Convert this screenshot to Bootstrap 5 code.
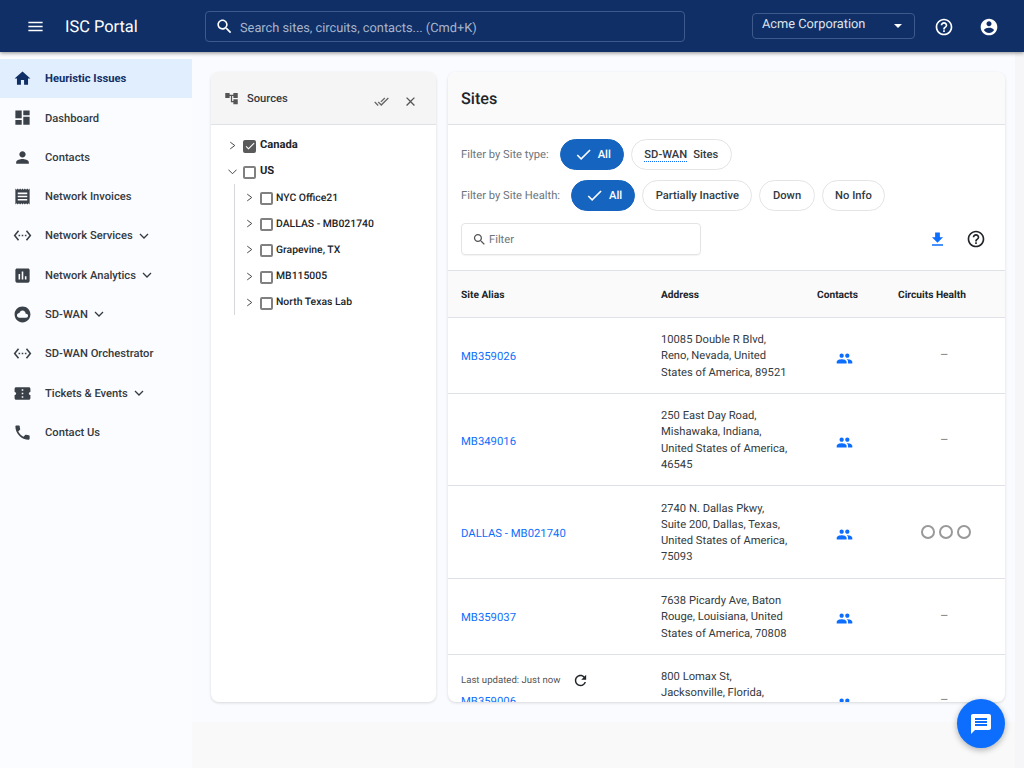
<!DOCTYPE html>
<html lang="en">
<head>
  <meta charset="UTF-8">
  <meta name="viewport" content="width=device-width, initial-scale=1.0">
  <title>ISC Portal</title>
  <link href="https://cdn.jsdelivr.net/npm/bootstrap@5.3.3/dist/css/bootstrap.min.css" rel="stylesheet">
  <style>
    html, body { height: 768px; overflow: hidden; }
    body { font-family: Roboto, "Liberation Sans", sans-serif; font-size: 11.2px; color: #212529; background: #f8fafe; text-rendering: geometricPrecision; }
    svg { fill: currentColor; display: block; flex: none; }
    .chev { fill: none; stroke: currentColor; stroke-width: 2.6; }

    .top-bar { height: 52px; background: #0f2f66; color: #fff; padding: 0 0 0 26px; box-shadow: 0 1px 4px rgba(0,0,0,.45); position: relative; z-index: 2; }
    .brand-name { font-size: 16.4px; margin-left: 20px; width: 140px; padding-top: 4px; }
    .search-box { width: 480px; height: 31px; border: 1px solid #3e5a8c; border-radius: 4px; padding: 5px 0 0 9px; color: #a9b5cb; font-size: 12.8px; }
    .search-box svg { color: #fff; margin-right: 6px; margin-top: -5px; }
    .org-select { width: 163px; height: 26px; margin-left: 67px; border: 1px solid #3e5a8c; border-radius: 4px; padding: 0 12px 2px 9px; font-size: 12.8px; color: #dfe4ee; }
    .org-caret { width: 0; height: 0; border-left: 4px solid transparent; border-right: 4px solid transparent; border-top: 4px solid #fff; margin-top: 1px; }
    .top-icon { margin-left: 19px; margin-top: 2px; }
    .top-icon.icon-last { margin-left: 25px; }

    .page-body { height: 716px; }
    .side-menu { width: 192px; flex: none; background: #fbfcff; padding-top: 7px; height: 716px; }
    .menu-item { height: 39.3px; padding: 2px 0 0 13px; color: #343a40; font-weight: 500; }
    .menu-item svg { margin-top: -2px; }
    .menu-item > svg:first-child { margin-right: 13px; color: #3b4148; }
    .menu-item .chev { margin-left: 5px; }
    .menu-item.is-active { background: #e1eefe; color: #0f2f66; font-weight: 700; }
    .menu-item.is-active > svg:first-child { color: #0f2f66; }

    .work-area { flex: 1; padding: 20px 19px 0 19px; height: 716px; background: linear-gradient(to left, #f6f6f8 9px, transparent 9px), linear-gradient(#fafbfe 670px, #f9f9fa 670px); }
    .panel { background: #fff; border: 0; border-radius: 8px; box-shadow: 0 1px 3px rgba(0,0,0,.14); height: 630px; overflow: hidden; position: relative; }
    .sources-panel { width: 225px; flex: none; }
    .sites-panel { width: 557px; flex: none; margin-left: 12px; }
    .panel-head { background: #f5f5f5; height: 53px; border-bottom: 1px solid #dee2e6; padding: 2px 18px 0 13px; font-size: 11.2px; font-weight: 500; color: #343a40; }
    .panel-head svg { margin-top: -2px; }
    .panel-head .panel-action { margin-top: 4px; }
    .sites-panel .panel-head { background: #fafafa; font-size: 16.2px; padding-left: 13px; color: #212529; }

    .tree-list { padding: 7px 0 0 17px; }
    .tree-row { height: 26.2px; color: #212529; font-weight: 500; font-size: 10.4px; }
    .tree-row .chev { color: #444; margin-right: 6px; }
    .tree-box { width: 13px; height: 13px; border: 2px solid #808080; border-radius: 2px; margin-right: 3px; margin-top: 2px; flex: none; display: flex; align-items: center; justify-content: center; }
    .tree-box.is-checked { background: #5a5a5a; border-color: #5a5a5a; color: #fff; }
    .tree-top { font-size: 11.2px; font-weight: 700; }
    .tree-top .tree-box { margin-right: 4px; }
    .tree-kids { margin-left: 6px; padding-left: 10px; border-left: 1px solid #d5d7da; }

    .filter-row { height: 41px; padding-left: 13px; }
    .filter-label { color: #6c757d; margin-right: 11px; padding-top: 1px; }
    .pill { height: 31px; border: 1px solid #e3e4e6; border-radius: 16px; padding: 1px 12.5px 0; font-weight: 500; color: #343a40; background: #fff; margin-right: 7px; }
    .pill.is-on { background: #1565c0; border-color: #1565c0; color: #fff; padding: 1px 12px 0 13px; }
    .pill.is-on svg { margin-right: 5px; margin-top: -1px; }
    .dotted-word { border-bottom: 1px dotted #0d6efd; margin-right: 6px; line-height: 13px; }
    .filter-box { width: 240px; height: 32px; border: 1px solid #e3e4e6; border-radius: 4px; margin-left: 13px; padding: 2px 0 0 10px; color: #6c757d; box-shadow: 0 1px 1px rgba(0,0,0,.05); }
    .filter-box svg { margin-right: 2px; margin-top: -2px; color: #555; }
    .filter-stack { padding-top: 9px; }
    .filter-tools { margin-top: 7px; }

    .sites-table { margin: 15px 0 0; table-layout: fixed; width: 557px; font-size: 11.2px; }
    .sites-table th { height: 47px; background: #fafafa; font-weight: 700; font-size: 10.2px; vertical-align: middle; padding: 4px 0 0; border-top: 1px solid #dee2e6; }
    .sites-table td { vertical-align: middle; padding: 14.1px 0 12.1px; line-height: 16.3px; color: #343a40; }
    .sites-table th:first-child, .sites-table td:first-child { padding-left: 13px; }
    .site-link { display: inline-block; padding-top: 2px; color: #0d6efd; text-decoration: none; font-weight: 400; font-size: 11.3px; }
    .sites-table .addr-cell { padding-right: 26px; }
    .sites-table .no-data { color: #888; padding-left: 42px; font-size: 13px; }
    .people-icon { color: #0d6efd; margin: 3px 0 0 19px; }
    .health-dots { padding-left: 23px; margin-top: -2px; }
    .health-dots i { display: block; width: 14px; height: 14px; border: 2px solid #999; border-radius: 50%; margin-right: 4px; }
    .last-updated { position: absolute; left: 13px; top: 600px; color: #555; font-size: 9.6px; padding-top: 2px; }
    .last-updated svg { margin-left: 11px; margin-top: -2px; color: #212529; }

    .chat-fab { position: absolute; left: 957px; top: 699px; width: 48px; height: 49px; border-radius: 50%; background: #0d6efd; color: #fff; box-shadow: 0 2px 6px rgba(0,0,0,.3); z-index: 3; }
  </style>
</head>
<body>
  <header class="top-bar d-flex align-items-center">
    <svg width="19" height="19" viewBox="0 0 24 24"><path d="M3 18h18v-2H3v2zm0-5h18v-2H3v2zm0-7v2h18V6H3z"/></svg>
    <div class="brand-name">ISC Portal</div>
    <div class="search-box d-flex align-items-center">
      <svg width="19" height="19" viewBox="0 0 24 24"><path d="M15.5 14h-.79l-.28-.27C15.41 12.59 16 11.11 16 9.5 16 5.91 13.09 3 9.5 3S3 5.91 3 9.5 5.91 16 9.5 16c1.61 0 3.09-.59 4.23-1.57l.27.28v.79l5 4.99L20.49 19l-4.99-5zm-6 0C7.01 14 5 11.99 5 9.5S7.01 5 9.5 5 14 7.01 14 9.5 11.99 14 9.5 14z"/></svg>
      <span>Search sites, circuits, contacts... (Cmd+K)</span>
    </div>
    <div class="org-select d-flex align-items-center justify-content-between">
      <span>Acme Corporation</span><span class="org-caret"></span>
    </div>
    <svg class="top-icon" width="20" height="20" viewBox="0 0 24 24"><path d="M11 18h2v-2h-2v2zm1-16C6.48 2 2 6.48 2 12s4.48 10 10 10 10-4.48 10-10S17.52 2 12 2zm0 18c-4.41 0-8-3.59-8-8s3.59-8 8-8 8 3.59 8 8-3.59 8-8 8zm0-14c-2.21 0-4 1.79-4 4h2c0-1.1.9-2 2-2s2 .9 2 2c0 2-3 1.75-3 5h2c0-2.25 3-2.5 3-5 0-2.21-1.79-4-4-4z"/></svg>
    <svg class="top-icon icon-last" width="20" height="20" viewBox="0 0 24 24"><path d="M12 2C6.48 2 2 6.48 2 12s4.48 10 10 10 10-4.48 10-10S17.52 2 12 2zm0 3c1.66 0 3 1.34 3 3s-1.34 3-3 3-3-1.34-3-3 1.34-3 3-3zm0 14.2c-2.5 0-4.71-1.28-6-3.22.03-1.99 4-3.08 6-3.08 1.99 0 5.97 1.09 6 3.08-1.29 1.94-3.5 3.22-6 3.22z"/></svg>
  </header>

  <div class="page-body d-flex">
    <nav class="side-menu">
      <div class="menu-item is-active d-flex align-items-center">
        <svg width="19" height="19" viewBox="0 0 24 24"><path d="M10 20v-6h4v6h5v-8h3L12 3 2 12h3v8z"/></svg>Heuristic Issues
      </div>
      <div class="menu-item d-flex align-items-center">
        <svg width="19" height="19" viewBox="0 0 24 24"><path d="M3 13h8V3H3v10zm0 8h8v-6H3v6zm10 0h8V11h-8v10zm0-18v6h8V3h-8z"/></svg>Dashboard
      </div>
      <div class="menu-item d-flex align-items-center">
        <svg width="19" height="19" viewBox="0 0 24 24"><path d="M12 12c2.21 0 4-1.79 4-4s-1.79-4-4-4-4 1.79-4 4 1.79 4 4 4zm0 2c-2.67 0-8 1.34-8 4v2h16v-2c0-2.66-5.33-4-8-4z"/></svg>Contacts
      </div>
      <div class="menu-item d-flex align-items-center">
        <svg width="19" height="19" viewBox="0 0 24 24"><path d="M18 17H6v-2h12v2zm0-4H6v-2h12v2zm0-4H6V7h12v2zM3 22l1.5-1.5L6 22l1.5-1.5L9 22l1.5-1.5L12 22l1.5-1.5L15 22l1.5-1.5L18 22l1.5-1.5L21 22V2l-1.5 1.5L18 2l-1.5 1.5L15 2l-1.5 1.5L12 2l-1.5 1.5L9 2 7.5 3.5 6 2 4.5 3.5 3 2v20z"/></svg>Network Invoices
      </div>
      <div class="menu-item d-flex align-items-center">
        <svg width="19" height="19" viewBox="0 0 24 24"><path d="M7.77 6.76L6.23 5.48.82 12l5.41 6.52 1.54-1.28L3.42 12l4.35-5.24zM7 13h2v-2H7v2zm10-2h-2v2h2v-2zm-6 2h2v-2h-2v2zm6.77-7.52l-1.54 1.28L20.58 12l-4.35 5.24 1.54 1.28L23.18 12l-5.41-6.52z"/></svg>Network Services
        <svg class="chev" width="12" height="12" viewBox="0 0 24 24"><path d="M4 8l8 8 8-8"/></svg>
      </div>
      <div class="menu-item d-flex align-items-center">
        <svg width="19" height="19" viewBox="0 0 24 24"><path d="M19 3H5c-1.1 0-2 .9-2 2v14c0 1.1.9 2 2 2h14c1.1 0 2-.9 2-2V5c0-1.1-.9-2-2-2zM9 17H7v-7h2v7zm4 0h-2V7h2v10zm4 0h-2v-4h2v4z"/></svg>Network Analytics
        <svg class="chev" width="12" height="12" viewBox="0 0 24 24"><path d="M4 8l8 8 8-8"/></svg>
      </div>
      <div class="menu-item d-flex align-items-center">
        <svg width="19" height="19" viewBox="0 0 24 24"><path d="M12 2C6.48 2 2 6.48 2 12s4.48 10 10 10 10-4.48 10-10S17.52 2 12 2zm4.5 14H8c-1.66 0-3-1.34-3-3s1.34-3 3-3l.14.01C8.58 8.28 10.13 7 12 7c2.21 0 4 1.79 4 4h.5c1.38 0 2.5 1.12 2.5 2.5S17.88 16 16.5 16z"/></svg>SD-WAN
        <svg class="chev" width="12" height="12" viewBox="0 0 24 24"><path d="M4 8l8 8 8-8"/></svg>
      </div>
      <div class="menu-item d-flex align-items-center">
        <svg width="19" height="19" viewBox="0 0 24 24"><path d="M7.77 6.76L6.23 5.48.82 12l5.41 6.52 1.54-1.28L3.42 12l4.35-5.24zM7 13h2v-2H7v2zm10-2h-2v2h2v-2zm-6 2h2v-2h-2v2zm6.77-7.52l-1.54 1.28L20.58 12l-4.35 5.24 1.54 1.28L23.18 12l-5.41-6.52z"/></svg>SD-WAN Orchestrator
      </div>
      <div class="menu-item d-flex align-items-center">
        <svg width="19" height="19" viewBox="0 0 24 24"><path d="M22 10V6c0-1.11-.9-2-2-2H4c-1.1 0-1.99.89-1.99 2v4c1.1 0 1.99.9 1.99 2s-.89 2-2 2v4c0 1.1.9 2 2 2h16c1.1 0 2-.9 2-2v-4c-1.1 0-2-.9-2-2s.9-2 2-2zm-9 7.5h-2v-2h2v2zm0-4.5h-2v-2h2v2zm0-4.5h-2v-2h2v2z"/></svg>Tickets &amp; Events
        <svg class="chev" width="12" height="12" viewBox="0 0 24 24"><path d="M4 8l8 8 8-8"/></svg>
      </div>
      <div class="menu-item d-flex align-items-center">
        <svg width="19" height="19" viewBox="0 0 24 24"><path d="M6.62 10.79c1.44 2.83 3.76 5.14 6.59 6.59l2.2-2.2c.27-.27.67-.36 1.02-.24 1.12.37 2.33.57 3.57.57.55 0 1 .45 1 1V20c0 .55-.45 1-1 1-9.39 0-17-7.61-17-17 0-.55.45-1 1-1h3.5c.55 0 1 .45 1 1 0 1.25.2 2.45.57 3.57.11.35.03.74-.25 1.02l-2.2 2.2z"/></svg>Contact Us
      </div>
    </nav>

    <main class="work-area d-flex align-items-start">
      <section class="panel sources-panel">
        <div class="panel-head d-flex align-items-center">
          <svg class="me-2" width="15" height="15" viewBox="0 0 24 24" style="color:#555"><path d="M22 11V3h-7v3H9V3H2v8h7V8h2v10h4v3h7v-8h-7v3h-2V8h2v3z"/></svg>
          <span class="flex-grow-1">Sources</span>
          <svg class="panel-action" width="15" height="15" viewBox="0 0 24 24" style="color:#666;margin-right:14px"><path d="M18 7l-1.41-1.41-6.34 6.34 1.41 1.41L18 7zm4.24-1.41L11.66 16.17 7.48 12l-1.41 1.41L11.66 19l12-12-1.42-1.41zM.41 13.41L6 19l1.41-1.41L1.83 12 .41 13.41z"/></svg>
          <svg class="panel-action" width="15" height="15" viewBox="0 0 24 24" style="color:#555"><path d="M19 6.41L17.59 5 12 10.59 6.41 5 5 6.41 10.59 12 5 17.59 6.41 19 12 13.41 17.59 19 19 17.59 13.41 12z"/></svg>
        </div>
        <div class="tree-list">
          <div class="tree-row tree-top d-flex align-items-center">
            <svg class="chev" width="9" height="11" viewBox="0 0 24 24"><path d="M6 3l12 9-12 9"/></svg>
            <span class="tree-box is-checked"><svg width="12" height="12" viewBox="0 0 24 24"><path d="M9 16.17L4.83 12l-1.42 1.41L9 19 21 7l-1.41-1.41z"/></svg></span>Canada
          </div>
          <div class="tree-row tree-top d-flex align-items-center">
            <svg class="chev" width="9" height="11" viewBox="0 0 24 24"><path d="M1 7l11 11L23 7"/></svg>
            <span class="tree-box"></span>US
          </div>
          <div class="tree-kids">
            <div class="tree-row d-flex align-items-center"><svg class="chev" width="9" height="11" viewBox="0 0 24 24"><path d="M6 3l12 9-12 9"/></svg><span class="tree-box"></span>NYC Office21</div>
            <div class="tree-row d-flex align-items-center"><svg class="chev" width="9" height="11" viewBox="0 0 24 24"><path d="M6 3l12 9-12 9"/></svg><span class="tree-box"></span>DALLAS - MB021740</div>
            <div class="tree-row d-flex align-items-center"><svg class="chev" width="9" height="11" viewBox="0 0 24 24"><path d="M6 3l12 9-12 9"/></svg><span class="tree-box"></span>Grapevine, TX</div>
            <div class="tree-row d-flex align-items-center"><svg class="chev" width="9" height="11" viewBox="0 0 24 24"><path d="M6 3l12 9-12 9"/></svg><span class="tree-box"></span>MB115005</div>
            <div class="tree-row d-flex align-items-center"><svg class="chev" width="9" height="11" viewBox="0 0 24 24"><path d="M6 3l12 9-12 9"/></svg><span class="tree-box"></span>North Texas Lab</div>
          </div>
        </div>
      </section>

      <section class="panel sites-panel">
        <div class="panel-head d-flex align-items-center">Sites</div>
        <div class="filter-stack">
          <div class="filter-row d-flex align-items-center">
            <span class="filter-label">Filter by Site type:</span>
            <span class="pill is-on d-flex align-items-center"><svg width="19" height="19" viewBox="0 0 24 24"><path d="M9 16.17L4.83 12l-1.42 1.41L9 19 21 7l-1.41-1.41z"/></svg>All</span>
            <span class="pill d-flex align-items-center"><span class="dotted-word">SD-WAN</span>Sites</span>
          </div>
          <div class="filter-row d-flex align-items-center">
            <span class="filter-label">Filter by Site Health:</span>
            <span class="pill is-on d-flex align-items-center"><svg width="19" height="19" viewBox="0 0 24 24"><path d="M9 16.17L4.83 12l-1.42 1.41L9 19 21 7l-1.41-1.41z"/></svg>All</span>
            <span class="pill d-flex align-items-center">Partially Inactive</span>
            <span class="pill d-flex align-items-center">Down</span>
            <span class="pill d-flex align-items-center">No Info</span>
          </div>
          <div class="filter-tools d-flex align-items-center">
            <div class="filter-box d-flex align-items-center">
              <svg width="15" height="15" viewBox="0 0 24 24"><path d="M15.5 14h-.79l-.28-.27C15.41 12.59 16 11.11 16 9.5 16 5.91 13.09 3 9.5 3S3 5.91 3 9.5 5.91 16 9.5 16c1.61 0 3.09-.59 4.23-1.57l.27.28v.79l5 4.99L20.49 19l-4.99-5zm-6 0C7.01 14 5 11.99 5 9.5S7.01 5 9.5 5 14 7.01 14 9.5 11.99 14 9.5 14z"/></svg>
              Filter
            </div>
            <svg class="ms-auto" width="19" height="19" viewBox="0 0 24 24" style="color:#0d6efd"><path d="M19 9h-4V3H9v6H5l7 7 7-7zM5 18v2h14v-2H5z"/></svg>
            <svg width="20" height="20" viewBox="0 0 24 24" style="margin:0 19px 0 19px"><path d="M11 18h2v-2h-2v2zm1-16C6.48 2 2 6.48 2 12s4.48 10 10 10 10-4.48 10-10S17.52 2 12 2zm0 18c-4.41 0-8-3.59-8-8s3.59-8 8-8 8 3.59 8 8-3.59 8-8 8zm0-14c-2.21 0-4 1.79-4 4h2c0-1.1.9-2 2-2s2 .9 2 2c0 2-3 1.75-3 5h2c0-2.25 3-2.5 3-5 0-2.21-1.79-4-4-4z"/></svg>
          </div>
        </div>
        <table class="table sites-table">
          <colgroup><col style="width:213px"><col style="width:156px"><col style="width:81px"><col></colgroup>
          <thead>
            <tr><th>Site Alias</th><th>Address</th><th>Contacts</th><th>Circuits Health</th></tr>
          </thead>
          <tbody>
            <tr>
              <td><a class="site-link" href="#">MB359026</a></td>
              <td class="addr-cell">10085 Double R Blvd, Reno, Nevada, United States of America, 89521</td>
              <td><svg class="people-icon" width="17" height="17" viewBox="0 0 24 24"><path d="M16 11c1.66 0 2.99-1.34 2.99-3S17.66 5 16 5c-1.66 0-3 1.34-3 3s1.34 3 3 3zm-8 0c1.66 0 2.99-1.34 2.99-3S9.66 5 8 5C6.34 5 5 6.34 5 8s1.34 3 3 3zm0 2c-2.33 0-7 1.17-7 3.5V19h14v-2.5c0-2.33-4.67-3.5-7-3.5zm8 0c-.29 0-.62.02-.97.05 1.16.84 1.97 1.97 1.97 3.45V19h6v-2.5c0-2.33-4.67-3.5-7-3.5z"/></svg></td>
              <td class="no-data">&ndash;</td>
            </tr>
            <tr>
              <td><a class="site-link" href="#">MB349016</a></td>
              <td class="addr-cell">250 East Day Road, Mishawaka, Indiana, United States of America, 46545</td>
              <td><svg class="people-icon" width="17" height="17" viewBox="0 0 24 24"><path d="M16 11c1.66 0 2.99-1.34 2.99-3S17.66 5 16 5c-1.66 0-3 1.34-3 3s1.34 3 3 3zm-8 0c1.66 0 2.99-1.34 2.99-3S9.66 5 8 5C6.34 5 5 6.34 5 8s1.34 3 3 3zm0 2c-2.33 0-7 1.17-7 3.5V19h14v-2.5c0-2.33-4.67-3.5-7-3.5zm8 0c-.29 0-.62.02-.97.05 1.16.84 1.97 1.97 1.97 3.45V19h6v-2.5c0-2.33-4.67-3.5-7-3.5z"/></svg></td>
              <td class="no-data">&ndash;</td>
            </tr>
            <tr>
              <td><a class="site-link" href="#">DALLAS - MB021740</a></td>
              <td class="addr-cell">2740 N. Dallas Pkwy, Suite 200, Dallas, Texas, United States of America, 75093</td>
              <td><svg class="people-icon" width="17" height="17" viewBox="0 0 24 24"><path d="M16 11c1.66 0 2.99-1.34 2.99-3S17.66 5 16 5c-1.66 0-3 1.34-3 3s1.34 3 3 3zm-8 0c1.66 0 2.99-1.34 2.99-3S9.66 5 8 5C6.34 5 5 6.34 5 8s1.34 3 3 3zm0 2c-2.33 0-7 1.17-7 3.5V19h14v-2.5c0-2.33-4.67-3.5-7-3.5zm8 0c-.29 0-.62.02-.97.05 1.16.84 1.97 1.97 1.97 3.45V19h6v-2.5c0-2.33-4.67-3.5-7-3.5z"/></svg></td>
              <td><div class="health-dots d-flex"><i></i><i></i><i></i></div></td>
            </tr>
            <tr>
              <td><a class="site-link" href="#">MB359037</a></td>
              <td class="addr-cell">7638 Picardy Ave, Baton Rouge, Louisiana, United States of America, 70808</td>
              <td><svg class="people-icon" width="17" height="17" viewBox="0 0 24 24"><path d="M16 11c1.66 0 2.99-1.34 2.99-3S17.66 5 16 5c-1.66 0-3 1.34-3 3s1.34 3 3 3zm-8 0c1.66 0 2.99-1.34 2.99-3S9.66 5 8 5C6.34 5 5 6.34 5 8s1.34 3 3 3zm0 2c-2.33 0-7 1.17-7 3.5V19h14v-2.5c0-2.33-4.67-3.5-7-3.5zm8 0c-.29 0-.62.02-.97.05 1.16.84 1.97 1.97 1.97 3.45V19h6v-2.5c0-2.33-4.67-3.5-7-3.5z"/></svg></td>
              <td class="no-data">&ndash;</td>
            </tr>
            <tr>
              <td><a class="site-link" href="#">MB359006</a></td>
              <td class="addr-cell">800 Lomax St, Jacksonville, Florida, United States of America, 32204</td>
              <td><svg class="people-icon" width="17" height="17" viewBox="0 0 24 24"><path d="M16 11c1.66 0 2.99-1.34 2.99-3S17.66 5 16 5c-1.66 0-3 1.34-3 3s1.34 3 3 3zm-8 0c1.66 0 2.99-1.34 2.99-3S9.66 5 8 5C6.34 5 5 6.34 5 8s1.34 3 3 3zm0 2c-2.33 0-7 1.17-7 3.5V19h14v-2.5c0-2.33-4.67-3.5-7-3.5zm8 0c-.29 0-.62.02-.97.05 1.16.84 1.97 1.97 1.97 3.45V19h6v-2.5c0-2.33-4.67-3.5-7-3.5z"/></svg></td>
              <td class="no-data">&ndash;</td>
            </tr>
          </tbody>
        </table>
        <div class="last-updated d-flex align-items-center">Last updated: Just now
          <svg width="17" height="17" viewBox="0 0 24 24"><path d="M17.65 6.35C16.2 4.9 14.21 4 12 4c-4.42 0-7.99 3.58-7.99 8s3.57 8 7.99 8c3.73 0 6.84-2.55 7.73-6h-2.08c-.82 2.33-3.04 4-5.65 4-3.31 0-6-2.69-6-6s2.69-6 6-6c1.66 0 3.14.69 4.22 1.78L13 11h7V4l-2.35 2.35z"/></svg>
        </div>
      </section>
    </main>
  </div>

  <div class="chat-fab d-flex align-items-center justify-content-center">
    <svg width="24" height="24" viewBox="0 0 24 24"><path d="M20 2H4c-1.1 0-1.99.9-1.99 2L2 22l4-4h14c1.1 0 2-.9 2-2V4c0-1.1-.9-2-2-2zm-2 12H6v-2h12v2zm0-3H6V9h12v2zm0-3H6V6h12v2z"/></svg>
  </div>
</body>
</html>
